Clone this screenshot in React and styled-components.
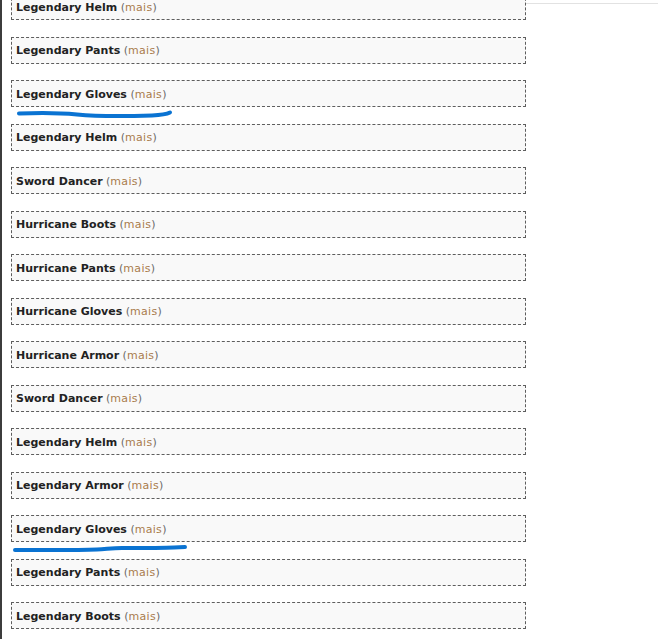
import React from 'react'
import styled, { createGlobalStyle } from 'styled-components'

const GlobalStyle = createGlobalStyle`
  html, body {
    margin: 0;
    padding: 0;
    background: #fff;
    overflow: hidden;
  }
  body {
    font-family: "DejaVu Sans", Verdana, sans-serif;
  }
`

const Page = styled.div`
  position: relative;
  display: flex;
  flex-direction: row;
  height: 639px;
  overflow: hidden;
  border-left: 2px solid #3c3c3c;
  box-sizing: border-box;
`

const Main = styled.div`
  display: flex;
  flex-direction: column;
  gap: 16.54px;
  width: 515px;
  padding-left: 9px;
  margin-top: -7px;
`

const Aside = styled.div`
  flex: 1;
  margin-top: 3px;
  height: 0;
  border-top: 1px solid #e2e2e2;
`

const Item = styled.div`
  display: flex;
  align-items: center;
  box-sizing: border-box;
  height: 27px;
  padding: 1px 4px 0;
  background: #f9f9f9;
  border: 1px dashed #5e5e5e;
  font-size: 11px;
  color: #6b6b6b;
  white-space: pre;
`

const Name = styled.b`
  font-weight: bold;
  color: #222;
`

const More = styled.span`
  color: #a97c4d;
  letter-spacing: 0.3px;
`

const Marks = styled.svg`
  position: absolute;
  left: 0;
  top: 0;
  pointer-events: none;
`

const items = [
  'Legendary Helm',
  'Legendary Pants',
  'Legendary Gloves',
  'Legendary Helm',
  'Sword Dancer',
  'Hurricane Boots',
  'Hurricane Pants',
  'Hurricane Gloves',
  'Hurricane Armor',
  'Sword Dancer',
  'Legendary Helm',
  'Legendary Armor',
  'Legendary Gloves',
  'Legendary Pants',
  'Legendary Boots'
]

export default function App () {
  return <>
    <GlobalStyle />
    <Page>
      <Main>
        {items.map((name, i) => (
          <Item key={i}>
            <Name>{name}</Name> (<More>mais</More>)
          </Item>
        ))}
      </Main>
      <Aside />
      <Marks width='658' height='639'>
        <path d='M17 113.5 C40 112.5 60 113 75 114.5 C95 116.5 120 116.5 150 115.5 C160 115 164 114.5 168 112.5'
          fill='none' stroke='#0a73d2' strokeWidth='4' strokeLinecap='round' />
        <path d='M13 550 C40 550 70 550.5 95 549.5 C105 549 110 548 120 548 C140 548 160 548 172 547.5 L183 547'
          fill='none' stroke='#0a73d2' strokeWidth='4' strokeLinecap='round' />
      </Marks>
    </Page>
  </>
}
